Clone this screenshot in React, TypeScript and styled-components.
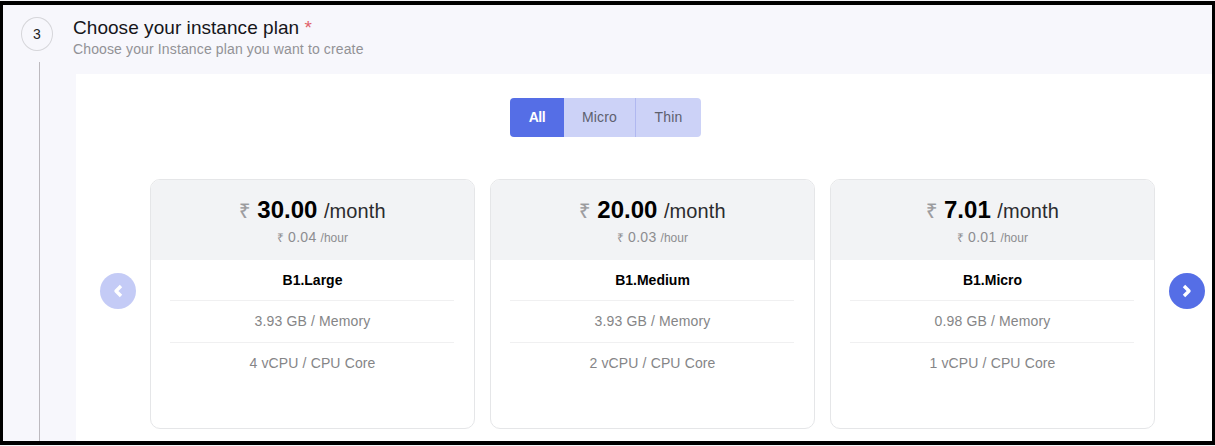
import React from "react";
import styled, { createGlobalStyle } from "styled-components";

const GlobalStyle = createGlobalStyle`
  * { box-sizing: border-box; }
  body { margin: 0; background: #f4f4f7; font-family: "Liberation Sans", Arial, sans-serif; }
`;

const Frame = styled.div`
  width: 1215px;
  height: 444px;
  margin-top: 1px;
  border: solid #000;
  border-width: 4px 3px 4px 3px;
  background: #f7f7fc;
  display: flex;
  overflow: hidden;
`;

const StepRail = styled.aside`
  width: 70px;
  flex: none;
  display: flex;
  flex-direction: column;
  padding: 12px 0 0 18px;
`;

const StepNumber = styled.div`
  width: 32px;
  height: 34px;
  flex: none;
  border: 1px solid #d6d6da;
  border-radius: 50%;
  display: flex;
  align-items: center;
  justify-content: center;
  font-size: 14px;
  color: #222;
`;

const StepLine = styled.div`
  width: 1px;
  flex: 1;
  margin: 11px 0 0 18px;
  background: #bdbabf;
`;

const Content = styled.main`
  flex: 1;
  display: flex;
  flex-direction: column;
`;

const Heading = styled.header`
  height: 69px;
  flex: none;
  padding-top: 12px;
`;

const Title = styled.h1`
  margin: 0;
  font-size: 19px;
  line-height: 22px;
  font-weight: 400;
  letter-spacing: 0.05px;
  color: #15151a;
`;

const Required = styled.span`
  color: #e0616b;
`;

const Subtitle = styled.p`
  margin: 2px 0 0;
  font-size: 14px;
  line-height: 16px;
  letter-spacing: 0.13px;
  color: #929296;
`;

const Panel = styled.section`
  flex: 1;
  margin-left: 3px;
  padding-top: 24px;
  background: #fff;
`;

const Tabs = styled.div`
  display: flex;
  width: 191px;
  height: 39px;
  margin-left: 434px;
  border-radius: 4px;
  overflow: hidden;
`;

const Tab = styled.button<{ $active?: boolean; $width: number; $divider?: boolean }>`
  width: ${(p) => p.$width}px;
  border: 0;
  border-left: ${(p) => (p.$divider ? "1px solid #b0b8f0" : "0")};
  padding: 0 0 2px;
  font: ${(p) => (p.$active ? 700 : 400)} 14px "Liberation Sans", Arial, sans-serif;
  letter-spacing: ${(p) => (p.$active ? -0.4 : 0.15)}px;
  color: ${(p) => (p.$active ? "#fff" : "#5d606e")};
  background: ${(p) => (p.$active ? "#556ee6" : "#ccd2f7")};
`;

const Carousel = styled.div`
  display: flex;
  align-items: flex-start;
  margin: 42px 0 0 24px;
`;

const Arrow = styled.button<{ $muted?: boolean }>`
  width: 36px;
  height: 36px;
  margin-top: 94px;
  flex: none;
  display: flex;
  align-items: center;
  justify-content: center;
  padding: 0 0 1px;
  border: 0;
  border-radius: 50%;
  background: ${(p) => (p.$muted ? "#c4cbf6" : "#556ee6")};
`;

const Cards = styled.div`
  display: flex;
  gap: 15px;
  margin: 0 14px;
`;

const Card = styled.article`
  width: 325px;
  height: 250px;
  border: 1px solid #e5e6e8;
  border-radius: 10px;
  overflow: hidden;
  text-align: center;
`;

const PriceBlock = styled.div`
  height: 80px;
  background: #f2f3f5;
  padding-top: 15px;
`;

const Monthly = styled.div`
  display: flex;
  justify-content: center;
  align-items: baseline;
  height: 30px;
  line-height: 30px;
`;

const Rupee = styled.span`
  font-size: 20px;
  color: #9b9b9e;
  -webkit-text-stroke: 0.2px #9b9b9e;
  margin-right: 7px;
`;

const Amount = styled.strong`
  font-size: 24px;
  color: #000;
  margin-right: 6.5px;
`;

const Period = styled.span`
  font-size: 20px;
  letter-spacing: 0.1px;
  color: #2b2b2e;
`;

const Hourly = styled.div`
  display: flex;
  justify-content: center;
  align-items: baseline;
  gap: 4px;
  height: 20px;
  line-height: 20px;
  margin-top: 2px;
  font-size: 14px;
  color: #8d8d90;
`;

const HourlyRate = styled.span`
  letter-spacing: 0.3px;
`;

const Small = styled.span`
  font-size: 12px;
`;

const Specs = styled.div`
  padding: 0 20px 0 19px;
`;

const Spec = styled.div<{ $name?: boolean }>`
  height: ${(p) => (p.$name ? 41 : 42)}px;
  line-height: ${(p) => (p.$name ? 40 : 41)}px;
  border-bottom: 1px solid #f0f0f1;
  padding-left: 1px;
  font-size: 14px;
  font-weight: ${(p) => (p.$name ? 700 : 400)};
  letter-spacing: ${(p) => (p.$name ? 0 : 0.14)}px;
  color: ${(p) => (p.$name ? "#000" : "#858587")};
  &:last-child { border-bottom: 0; }
`;

const Chevron = ({ right }: { right?: boolean }) => (
  <svg width="12" height="14" viewBox="0 0 12 14" fill="none" stroke="#fff" strokeWidth="3.4" strokeLinejoin="round">
    <path d={right ? "M3 2 L8 7 L3 12" : "M9 2 L4 7 L9 12"} />
  </svg>
);

const plans = [
  { name: "B1.Large", month: "30.00", hour: "0.04", memory: "3.93", cpu: 4 },
  { name: "B1.Medium", month: "20.00", hour: "0.03", memory: "3.93", cpu: 2 },
  { name: "B1.Micro", month: "7.01", hour: "0.01", memory: "0.98", cpu: 1 },
];

export default function App() {
  return (
    <>
      <GlobalStyle />
      <Frame>
        <StepRail>
          <StepNumber>3</StepNumber>
          <StepLine />
        </StepRail>
        <Content>
          <Heading>
            <Title>
              Choose your instance plan <Required>*</Required>
            </Title>
            <Subtitle>Choose your Instance plan you want to create</Subtitle>
          </Heading>
          <Panel>
            <Tabs>
              <Tab $active $width={54}>All</Tab>
              <Tab $width={71}>Micro</Tab>
              <Tab $width={66} $divider>Thin</Tab>
            </Tabs>
            <Carousel>
              <Arrow $muted aria-label="Previous plans"><Chevron /></Arrow>
              <Cards>
                {plans.map((p) => (
                  <Card key={p.name}>
                    <PriceBlock>
                      <Monthly>
                        <Rupee>₹</Rupee>
                        <Amount>{p.month}</Amount>
                        <Period>/month</Period>
                      </Monthly>
                      <Hourly>
                        <Small>₹</Small>
                        <HourlyRate>{p.hour}</HourlyRate>
                        <Small>/hour</Small>
                      </Hourly>
                    </PriceBlock>
                    <Specs>
                      <Spec $name>{p.name}</Spec>
                      <Spec>{p.memory} GB / Memory</Spec>
                      <Spec>{p.cpu} vCPU / CPU Core</Spec>
                    </Specs>
                  </Card>
                ))}
              </Cards>
              <Arrow aria-label="Next plans"><Chevron right /></Arrow>
            </Carousel>
          </Panel>
        </Content>
      </Frame>
    </>
  );
}
